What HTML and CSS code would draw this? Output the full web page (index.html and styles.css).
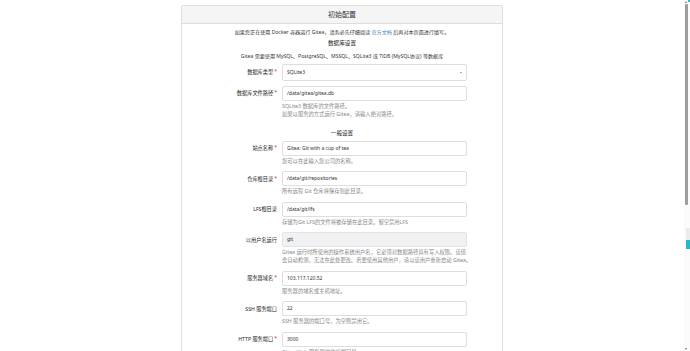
FILE: index.html
```html
<!DOCTYPE html>
<html lang="zh-CN">
<head>
    <meta charset="UTF-8">
    <meta name="viewport" content="width=device-width, initial-scale=1.0">
    <title>安装页面 - Gitea</title>
    <link rel="stylesheet" href="styles.css">
</head>
<body>
    <div class="page">
        <div class="card">
            <h3 class="card-title">初始配置</h3>
            <div class="card-body">
                <p class="notice">如果您正在使用 Docker 容器运行 Gitea，请务必先仔细阅读 <a href="#">官方文档</a> 后再对本页面进行填写。</p>

                <!-- Database settings -->
                <h4 class="section-title">数据库设置</h4>
                <p class="notice notice-db">Gitea 需要使用 MySQL、PostgreSQL、MSSQL、SQLite3 或 TiDB (MySQL协议) 等数据库</p>

                <div class="field first">
                    <label class="required">数据库类型</label>
                    <div class="select">SQLite3<span class="caret"></span></div>
                </div>
                <div class="field tight">
                    <label class="required">数据库文件路径</label>
                    <div class="input">/data/gitea/gitea.db</div>
                    <p class="help">SQLite3 数据库的文件路径。<br>如果以服务的方式运行 Gitea，请输入绝对路径。</p>
                </div>

                <!-- General settings -->
                <h4 class="section-title general">一般设置</h4>

                <div class="field first">
                    <label class="required">站点名称</label>
                    <div class="input">Gitea: Git with a cup of tea</div>
                    <p class="help">您可以在此输入您公司的名称。</p>
                </div>
                <div class="field">
                    <label class="required">仓库根目录</label>
                    <div class="input">/data/git/repositories</div>
                    <p class="help">所有远程 Git 仓库将保存到此目录。</p>
                </div>
                <div class="field">
                    <label>LFS根目录</label>
                    <div class="input">/data/git/lfs</div>
                    <p class="help">存储为Git LFS的文件将被存储在此目录。留空禁用LFS</p>
                </div>
                <div class="field">
                    <label>以用户名运行</label>
                    <div class="input disabled">git</div>
                    <p class="help">Gitea 运行时所使用的操作系统用户名，它必须对数据路径具有写入权限。该值<br>会自动检测，无法在此处更改。若要使用其他用户，请以该用户重新启动 Gitea。</p>
                </div>
                <div class="field">
                    <label class="required">服务器域名</label>
                    <div class="input">103.117.120.52</div>
                    <p class="help">服务器的域名或主机地址。</p>
                </div>
                <div class="field">
                    <label>SSH 服务端口</label>
                    <div class="input">22</div>
                    <p class="help">SSH 服务器的端口号，为空则禁用它。</p>
                </div>
                <div class="field">
                    <label class="required">HTTP 服务端口</label>
                    <div class="input">3000</div>
                    <p class="help">Gitea Web 服务器的监听端口号。</p>
                </div>
            </div>
        </div>
    </div>

    <!-- Window scrollbar and side tab -->
    <div class="scrollbar">
        <span class="arrow up"></span>
        <span class="thumb"></span>
        <span class="arrow down"></span>
    </div>
    <div class="side-tab"></div>
    <div class="side-dot"></div>
</body>
</html>
```

FILE: styles.css
```css
* {
    box-sizing: border-box;
}

html, body {
    margin: 0;
    height: 100%;
    overflow: hidden;
}

body {
    font-family: "Noto Sans", "Noto Sans CJK SC", sans-serif;
    background-color: #fff;
    color: #333;
}

.page {
    padding: 5px 6px 0 0;
}

.card {
    width: 322px;
    margin: 0 auto;
    border: 1px solid #dedede;
    border-radius: 2px;
    background: #fff;
}

.card-title {
    margin: 0;
    height: 18px;
    line-height: 17px;
    text-align: center;
    font-size: 7px;
    font-weight: normal;
    color: #333;
    background-color: #f5f5f6;
    border-bottom: 1px solid #dedede;
}

.card-body {
    padding-top: 4px;
    padding-bottom: 20px;
}

.notice {
    margin: 0;
    line-height: 8px;
    font-size: 5.1px;
    text-align: center;
    color: #333;
}

.notice a {
    color: #4183c4;
    text-decoration: none;
}

.notice-db {
    margin-top: 5px;
}

.section-title {
    margin: 3px 0 0;
    line-height: 8px;
    font-size: 5.6px;
    font-weight: normal;
    text-align: center;
    color: #222;
}

.section-title.general {
    margin-top: 11px;
}

.field {
    display: grid;
    grid-template-columns: 95px 185px;
    column-gap: 5px;
    margin-top: 6.5px;
}

.field.first {
    margin-top: 4px;
}

.field.tight {
    margin-top: 5px;
}

.field label {
    grid-column: 1;
    grid-row: 1;
    align-self: center;
    text-align: right;
    font-size: 5.2px;
    font-weight: normal;
    color: #1b1b1b;
}

.field label.required::after {
    content: "*";
    color: #db2828;
    margin-left: 1px;
    position: relative;
    top: -1px;
}

.input,
.select {
    grid-column: 2;
    height: 15px;
    line-height: 13px;
    padding: 0 4px;
    font-size: 5px;
    color: #333;
    border: 1px solid #dedede;
    border-radius: 2px;
    background: #fff;
}

.select {
    height: 16.5px;
    line-height: 14.5px;
    position: relative;
}

.caret {
    position: absolute;
    right: 4px;
    top: 7px;
    border-left: 1.2px solid transparent;
    border-right: 1.2px solid transparent;
    border-top: 1.5px solid #555;
}

.input.disabled {
    background-color: #f0f1f3;
    border-color: #e3e4e6;
}

.help {
    grid-column: 2;
    margin: 1px 0 0;
    line-height: 8px;
    font-size: 5.3px;
    white-space: nowrap;
    color: #888;
}

/* Fake window scrollbar */
.scrollbar {
    position: fixed;
    top: 0;
    right: 0;
    bottom: 0;
    width: 6px;
    background: #fbfbfb;
}

.thumb {
    position: absolute;
    left: 1px;
    top: 4px;
    width: 3px;
    height: 201px;
    background: #9d9d9d;
    border-radius: 1px;
}

.arrow {
    position: absolute;
    left: 1px;
    border-left: 1.5px solid transparent;
    border-right: 1.5px solid transparent;
}

.arrow.up {
    top: 1px;
    border-bottom: 2px solid #777;
}

.arrow.down {
    bottom: 1px;
    border-top: 2px solid #777;
}

.side-tab {
    position: fixed;
    right: 0;
    top: 228px;
    width: 4px;
    height: 21px;
    background: linear-gradient(#ececec 0 12px, #21b8c9 12px 100%);
}

.side-dot {
    position: fixed;
    right: 0;
    top: 0;
    width: 2px;
    height: 2px;
    background: #34b8c1;
}
```
